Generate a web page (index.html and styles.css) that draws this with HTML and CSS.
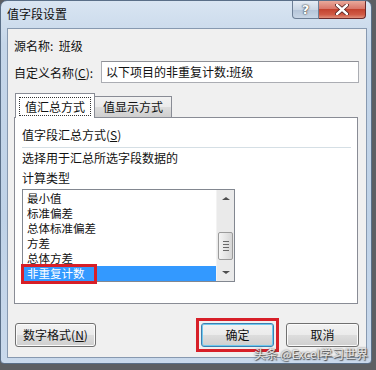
FILE: index.html
```html
<!DOCTYPE html>
<html lang="zh-CN">
<head>
    <meta charset="UTF-8">
    <title>值字段设置</title>
    <link rel="stylesheet" href="styles.css">
</head>
<body>
    <div class="window">
        <div class="titlebar">
            <span class="title">值字段设置</span>
            <div class="caption-btns">
                <div class="btn-help">?</div>
                <div class="btn-close">
                    <svg width="14" height="11" viewBox="0 0 14 11">
                        <path d="M2 1 L12 10 M12 1 L2 10" stroke="#4a1a1a" stroke-width="4" stroke-linecap="round"/>
                        <path d="M2 1 L12 10 M12 1 L2 10" stroke="#fff" stroke-width="2.4" stroke-linecap="round"/>
                    </svg>
                </div>
            </div>
        </div>

        <div class="client">
            <div class="source-row">源名称:&nbsp;&nbsp;班级</div>

            <div class="name-row">
                <span>自定义名称(<u>C</u>):</span>
                <div class="textbox">以下项目的非重复计数:班级</div>
            </div>

            <div class="tabs">
                <div class="tab active"><span class="focus">值汇总方式</span></div>
                <div class="tab">值显示方式</div>
            </div>

            <div class="tab-panel">
                <div class="group-title">值字段汇总方式(<u>S</u>)</div>
                <div class="sep"></div>
                <div class="hint">选择用于汇总所选字段数据的<br>计算类型</div>

                <div class="listbox">
                    <div class="items">
                        <div class="item">最小值</div>
                        <div class="item">标准偏差</div>
                        <div class="item">总体标准偏差</div>
                        <div class="item">方差</div>
                        <div class="item">总体方差</div>
                        <div class="item selected"><span class="mark">非重复计数</span></div>
                    </div>
                    <div class="scrollbar">
                        <div class="arrow up"></div>
                        <div class="track">
                            <div class="thumb"><i></i><i></i><i></i><i></i></div>
                        </div>
                        <div class="arrow down"></div>
                    </div>
                </div>
            </div>

            <div class="footer">
                <div class="button wide">数字格式(<u>N</u>)</div>
                <div class="spacer"></div>
                <div class="button default">确定</div>
                <div class="button">取消</div>
            </div>
        </div>

        <div class="watermark">头条 @Excel学习世界</div>
    </div>
</body>
</html>
```

FILE: styles.css
```css
body {
    margin: 0;
    background: #5c5f63;
    font-family: "Noto Sans CJK SC", "Microsoft YaHei", sans-serif;
    font-size: 12px;
    color: #111;
}

.window {
    position: relative;
    width: 372px;
    height: 364px;
    box-sizing: border-box;
    border-radius: 7px 7px 4px 4px;
    border: 1px solid #5a6f88;
    background: linear-gradient(180deg, #d9e5f2 0%, #c5d6e9 12%, #bfd2e7 60%, #c9d9ec 100%);
    overflow: hidden;
}

/* title bar */
.titlebar {
    height: 27px;
    display: flex;
    align-items: flex-start;
}

.title {
    margin: 5px 0 0 6px;
    line-height: 16px;
    font-size: 12px;
    color: #101010;
}

.caption-btns {
    margin-left: auto;
    margin-right: 5px;
    display: flex;
}

.btn-help {
    width: 27px;
    height: 18px;
    box-sizing: border-box;
    border: 1px solid #6d7f96;
    border-top: none;
    border-radius: 0 0 0 4px;
    background: linear-gradient(180deg, #e4ebf4 0%, #cad6e4 50%, #b4c4d8 51%, #c8d6e6 100%);
    color: #fff;
    font-family: "DejaVu Sans", sans-serif;
    font-weight: bold;
    font-size: 13px;
    line-height: 17px;
    text-align: center;
    text-shadow: 0 0 2px #333, 0 0 1px #333;
}

.btn-close {
    width: 47px;
    height: 18px;
    box-sizing: border-box;
    border: 1px solid #6b2a2a;
    border-top: none;
    border-left: none;
    border-radius: 0 0 4px 0;
    background: linear-gradient(180deg, #e9a99b 0%, #d9776a 45%, #c3432f 50%, #d05a45 80%, #e0907c 100%);
    display: flex;
    align-items: center;
    justify-content: center;
}

/* client area */
.client {
    margin: 0 4px 0 6px;
    height: 330px;
    box-sizing: border-box;
    border: 1px solid #8799b0;
    background: #f0f0f0;
    padding: 0 7px 0 6px;
    display: flex;
    flex-direction: column;
}

.source-row {
    margin-top: 9px;
    line-height: 16px;
}

.name-row {
    margin-top: 7px;
    display: flex;
    align-items: center;
}

.textbox {
    margin-left: auto;
    width: 258px;
    height: 22px;
    box-sizing: border-box;
    border: 1px solid #abadb3;
    border-top-color: #8e9096;
    background: #fff;
    padding-left: 4px;
    line-height: 20px;
}

/* tabs */
.tabs {
    margin-top: 10px;
    height: 24px;
    display: flex;
    align-items: flex-end;
    padding-left: 1px;
    position: relative;
    z-index: 1;
}

.tab {
    height: 21px;
    box-sizing: border-box;
    padding: 0 8px;
    border: 1px solid #898c95;
    border-bottom: none;
    border-left: none;
    background: linear-gradient(180deg, #f2f2f2 0%, #ebebeb 50%, #dddddd 51%, #cfcfcf 100%);
    line-height: 20px;
}

.tab.active {
    height: 25px;
    margin-bottom: -1px;
    border-left: 1px solid #898c95;
    background: #fff;
    padding: 3px 3px 0;
}

.focus {
    display: block;
    padding: 0 5px;
    border: 1px dotted #333;
    line-height: 17px;
}

.tab-panel {
    height: 187px;
    box-sizing: border-box;
    margin-right: 1px;
    border: 1px solid #898c95;
    background: #fff;
    padding: 9px 6px 0 7px;
}

.group-title {
    line-height: 16px;
}

.sep {
    margin-top: 4px;
    height: 1px;
    background: #d5dfe5;
}

.hint {
    line-height: 20px;
}

/* list box */
.listbox {
    margin-top: 1px;
    width: 213px;
    height: 93px;
    box-sizing: border-box;
    border: 1px solid #828790;
    display: flex;
}

.items {
    flex: 1;
    padding-top: 1px;
}

.item {
    height: 15px;
    line-height: 15px;
    font-size: 11.5px;
    padding-left: 4px;
}

.item.selected {
    margin-left: 1px;
    padding-left: 3px;
    background: #3399ff;
    color: #fff;
}

.mark {
    display: inline-block;
    position: relative;
    padding-right: 8px;
}

.mark::after {
    content: "";
    position: absolute;
    top: -2px;
    bottom: -3px;
    left: -6px;
    right: -4px;
    border: 3px solid #d71f28;
}

.scrollbar {
    width: 17px;
    display: flex;
    flex-direction: column;
    background: #eaeaea;
    border-left: 1px solid #f3f3f3;
}

.arrow {
    height: 17px;
    position: relative;
}

.arrow::after {
    content: "";
    position: absolute;
    left: 5px;
    border-left: 4px solid transparent;
    border-right: 4px solid transparent;
}

.arrow.up::after {
    top: 7px;
    border-bottom: 3px solid #4d4d4d;
}

.arrow.down::after {
    top: 7px;
    border-top: 3px solid #4d4d4d;
}

.track {
    flex: 1;
    display: flex;
    flex-direction: column;
    justify-content: flex-end;
}

.thumb {
    height: 28px;
    margin: 0 1px 4px;
    box-sizing: border-box;
    border: 1px solid #9b9b9b;
    border-radius: 2px;
    background: linear-gradient(90deg, #f4f4f4, #e6e6e6 50%, #d6d6d6);
    display: flex;
    flex-direction: column;
    justify-content: center;
    align-items: center;
    gap: 2px;
}

.thumb i {
    display: block;
    width: 6px;
    height: 1px;
    background: #6a6a6a;
}

/* buttons */
.footer {
    margin-top: 19px;
    display: flex;
    gap: 12px;
    padding-left: 1px;
}

.spacer {
    flex: 1;
}

.button {
    width: 73px;
    height: 24px;
    box-sizing: border-box;
    border: 1px solid #707070;
    border-radius: 3px;
    background: linear-gradient(180deg, #f2f2f2 0%, #ebebeb 48%, #dddddd 50%, #cfcfcf 100%);
    text-align: center;
    line-height: 22px;
    box-shadow: inset 0 0 0 1px #fbfbfb;
}

.button.wide {
    width: 81px;
}

.button.default {
    position: relative;
    border-color: #3c7fb1;
    box-shadow: inset 0 0 0 1px #6fc8ee;
}

.button.default::after {
    content: "";
    position: absolute;
    inset: -6px;
    border: 3px solid #d71f28;
}

.watermark {
    position: absolute;
    right: 3px;
    bottom: 2px;
    font-size: 12px;
    line-height: 14px;
    color: #e8e8e8;
    text-shadow: 0 0 2px #555, 1px 1px 1px #444;
}
```
